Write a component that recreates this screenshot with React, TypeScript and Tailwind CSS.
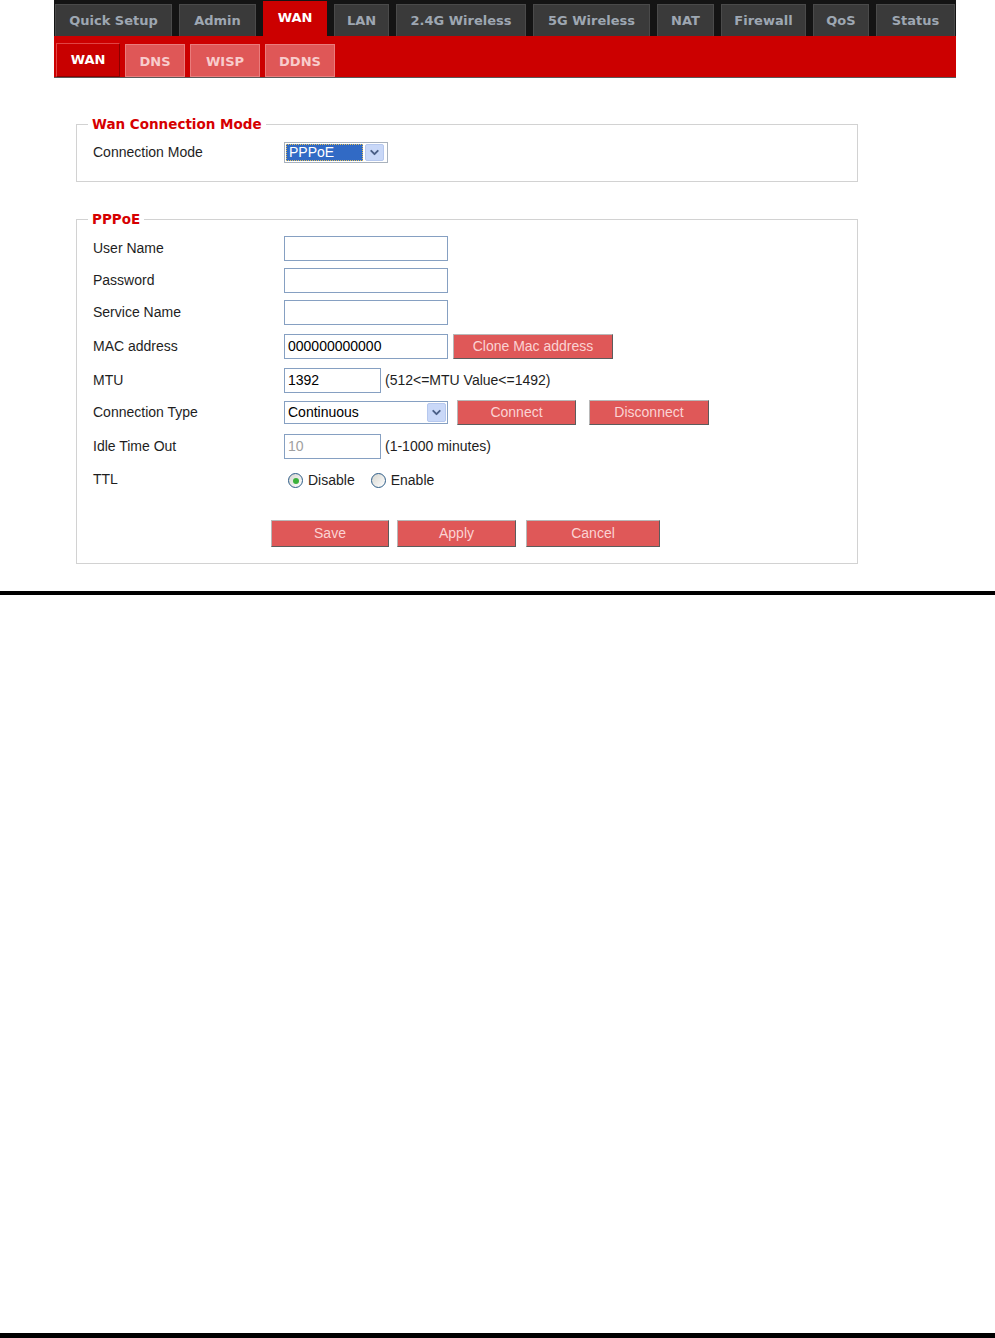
import { ChevronDown } from "lucide-react";

const mainTabs = [
  { label: "Quick Setup", width: "w-[117px]" },
  { label: "Admin", width: "w-[77px]" },
  { label: "WAN", width: "w-[64px]", active: true },
  { label: "LAN", width: "w-[55px]" },
  { label: "2.4G Wireless", width: "w-[130px]" },
  { label: "5G Wireless", width: "w-[117px]" },
  { label: "NAT", width: "w-[57px]" },
  { label: "Firewall", width: "w-[85px]" },
  { label: "QoS", width: "w-[56px]" },
  { label: "Status", width: "w-[79px]" },
];

const subTabs = [
  { label: "WAN", width: "w-[64px]", active: true },
  { label: "DNS", width: "w-[60px]" },
  { label: "WISP", width: "w-[70px]" },
  { label: "DDNS", width: "w-[70px]" },
];

function RedButton({ label, className }: { label: string; className: string }) {
  return (
    <button
      type="button"
      className={`flex items-center justify-center border border-[#b8b8b8] border-b-[#5c5c5c] border-r-[#5c5c5c] bg-[#df5858] text-[14px] text-[#fbd3d3] ${className}`}
    >
      {label}
    </button>
  );
}

function TextBox({ value, width, muted }: { value?: string; width: string; muted?: boolean }) {
  return (
    <div
      className={`flex h-[25px] items-center border border-[#86a0c2] bg-white px-[3px] text-[14px] ${width} ${muted ? "text-[#a0a0a0]" : "text-black"}`}
    >
      {value}
    </div>
  );
}

function ArrowBox({ className }: { className: string }) {
  return (
    <span
      className={`flex items-center justify-center rounded-[2px] border border-[#b6c8ee] bg-[#c9d8f8] ${className}`}
    >
      <ChevronDown className="h-[13px] w-[13px] text-[#4a5f86]" strokeWidth={3.5} />
    </span>
  );
}

function Radio({ checked }: { checked?: boolean }) {
  return (
    <span className="flex h-[15px] w-[15px] items-center justify-center rounded-full border border-[#2d5c87] bg-gradient-to-br from-[#d6d6d0] to-white">
      {checked && <span className="h-[6px] w-[6px] rounded-full bg-[#3bb13b]" />}
    </span>
  );
}

function Label({ children }: { children: string }) {
  return <span className="w-[191px] shrink-0 text-[14px] text-[#1e1e1e]">{children}</span>;
}

export default function App() {
  return (
    <div className="flex h-[1338px] w-[995px] flex-col bg-white font-['Liberation_Sans',Arial,sans-serif]">
      <div className="ml-[54px] w-[902px] font-['DejaVu_Sans',Verdana,sans-serif] text-[13px] font-bold">
        <nav className="flex h-[36px] items-end gap-[7px] bg-[#141414] pl-px">
          {mainTabs.map((tab) =>
            tab.active ? (
              <div
                key={tab.label}
                className={`flex h-[35px] items-center justify-center bg-[#cc0000] pb-px text-white ${tab.width}`}
              >
                {tab.label}
              </div>
            ) : (
              <div
                key={tab.label}
                className={`flex h-[32px] items-center justify-center border-t border-l border-r border-[#4a4a4a] bg-[#3a3a3a] pt-[1px] text-[#9ea7b2] ${tab.width}`}
              >
                {tab.label}
              </div>
            ),
          )}
        </nav>
        <div className="flex h-[42px] items-end gap-[5px] border-b border-[#5a5a5a] bg-[#cc0000] pl-[2px]">
          {subTabs.map((tab) =>
            tab.active ? (
              <div
                key={tab.label}
                className={`flex h-[34px] items-center justify-center border border-[#e04444] border-b-[#8a0000] border-r-[#8a0000] bg-[#c80000] text-white ${tab.width}`}
              >
                {tab.label}
              </div>
            ) : (
              <div
                key={tab.label}
                className={`flex h-[33px] items-center justify-center border border-[#ea7c7c] bg-[#df5757] pt-[2px] text-[#f8cccc] ${tab.width}`}
              >
                {tab.label}
              </div>
            ),
          )}
        </div>
      </div>

      <div className="ml-[76px] w-[782px]">
        <fieldset className="mt-[37px] border border-[#d2d2d2] pb-[18px] pl-[16px] pt-[9px]">
          <legend className="ml-[-5px] px-[4px] font-['DejaVu_Sans',Verdana,sans-serif] text-[13.5px] font-bold leading-[18px] text-[#d60000]">
            Wan Connection Mode
          </legend>
          <div className="flex h-[21px] items-center">
            <Label>Connection Mode</Label>
            <div className="flex h-[21px] w-[104px] items-center gap-[2px] border border-[#a9b2bd] bg-white p-[1px]">
              <span className="flex h-full w-[77px] items-center border border-dotted border-[#e2bf5c] bg-[#316ac5] px-[2px] text-[14px] text-white">
                PPPoE
              </span>
              <ArrowBox className="h-[17px] w-[19px]" />
            </div>
          </div>
        </fieldset>

        <fieldset className="mt-[28px] border border-[#d2d2d2] pb-[16px] pl-[16px] pt-[8px]">
          <legend className="ml-[-5px] px-[4px] font-['DejaVu_Sans',Verdana,sans-serif] text-[13.5px] font-bold leading-[18px] text-[#d60000]">
            PPPoE
          </legend>
          <div className="flex items-center">
            <Label>User Name</Label>
            <TextBox width="w-[164px]" />
          </div>
          <div className="mt-[7px] flex items-center">
            <Label>Password</Label>
            <TextBox width="w-[164px]" />
          </div>
          <div className="mt-[7px] flex items-center">
            <Label>Service Name</Label>
            <TextBox width="w-[164px]" />
          </div>
          <div className="mt-[9px] flex items-center">
            <Label>MAC address</Label>
            <TextBox value="000000000000" width="w-[164px]" />
            <RedButton label="Clone Mac address" className="ml-[5px] h-[25px] w-[160px]" />
          </div>
          <div className="mt-[9px] flex items-center">
            <Label>MTU</Label>
            <TextBox value="1392" width="w-[97px]" />
            <span className="ml-[4px] text-[14px] text-[#1e1e1e]">(512&lt;=MTU Value&lt;=1492)</span>
          </div>
          <div className="mt-[7px] flex h-[25px] items-center">
            <Label>Connection Type</Label>
            <div className="flex h-[23px] w-[164px] items-center justify-between border border-[#86a0c2] bg-white pl-[3px] pr-[1px] text-[14px] text-black">
              <span>Continuous</span>
              <ArrowBox className="h-[19px] w-[19px]" />
            </div>
            <RedButton label="Connect" className="ml-[9px] h-[25px] w-[119px]" />
            <RedButton label="Disconnect" className="ml-[13px] h-[25px] w-[120px]" />
          </div>
          <div className="mt-[9px] flex items-center">
            <Label>Idle Time Out</Label>
            <TextBox value="10" width="w-[97px]" muted />
            <span className="ml-[4px] text-[14px] text-[#1e1e1e]">(1-1000 minutes)</span>
          </div>
          <div className="mt-[9px] flex h-[22px] items-center text-[14px] text-[#1e1e1e]">
            <Label>TTL</Label>
            <span className="ml-[4px] flex items-center gap-[5px] pt-[3px]">
              <Radio checked />
              <span>Disable</span>
            </span>
            <span className="ml-[16px] flex items-center gap-[5px] pt-[3px]">
              <Radio />
              <span>Enable</span>
            </span>
          </div>
          <div className="mt-[30px] flex items-center pl-[178px]">
            <RedButton label="Save" className="h-[27px] w-[118px]" />
            <RedButton label="Apply" className="ml-[8px] h-[27px] w-[119px]" />
            <RedButton label="Cancel" className="ml-[10px] h-[27px] w-[134px]" />
          </div>
        </fieldset>
      </div>

      <div className="mt-[27px] h-[4px] bg-black" />
      <div className="mt-auto h-[5px] bg-black" />
    </div>
  );
}
